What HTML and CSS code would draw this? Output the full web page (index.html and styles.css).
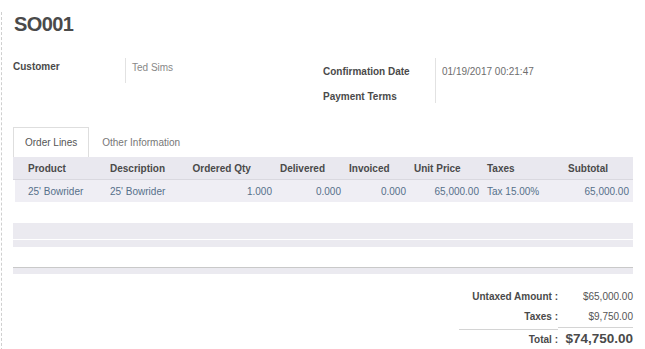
FILE: index.html
```html
<!DOCTYPE html>
<html lang="en">
<head>
    <meta charset="UTF-8">
    <title>SO001</title>
    <link rel="stylesheet" href="styles.css">
</head>
<body>
    <div class="sheet">
        <h1 class="title">SO001</h1>

        <div class="groups">
            <div class="group group-left">
                <div class="label">Customer</div>
                <div class="value">Ted Sims</div>
            </div>
            <div class="group group-right">
                <div class="label first">Confirmation Date</div>
                <div class="value first">01/19/2017 00:21:47</div>
                <div class="label second">Payment Terms</div>
                <div class="value second"></div>
            </div>
        </div>

        <div class="tabs">
            <div class="tab active">Order Lines</div>
            <div class="tab">Other Information</div>
        </div>

        <table class="lines">
            <colgroup>
                <col style="width: 93px">
                <col style="width: 82.5px">
                <col style="width: 87.5px">
                <col style="width: 69px">
                <col style="width: 65px">
                <col style="width: 73px">
                <col style="width: 81px">
                <col style="width: 69px">
            </colgroup>
            <thead>
                <tr>
                    <th class="first-col">Product</th>
                    <th>Description</th>
                    <th>Ordered Qty</th>
                    <th>Delivered</th>
                    <th>Invoiced</th>
                    <th>Unit Price</th>
                    <th>Taxes</th>
                    <th>Subtotal</th>
                </tr>
            </thead>
            <tbody>
                <tr>
                    <td class="first-col">25' Bowrider</td>
                    <td>25' Bowrider</td>
                    <td class="num">1.000</td>
                    <td class="num">0.000</td>
                    <td class="num">0.000</td>
                    <td class="num">65,000.00</td>
                    <td>Tax 15.00%</td>
                    <td class="num">65,000.00</td>
                </tr>
            </tbody>
        </table>

        <div class="empty-rows">
            <div class="band band-tall"></div>
            <div class="band band-short"></div>
        </div>
        <div class="list-foot"></div>

        <div class="totals">
            <div class="t-label">Untaxed Amount :</div>
            <div class="t-value">$65,000.00</div>
            <div class="t-label">Taxes :</div>
            <div class="t-value">$9,750.00</div>
            <div class="t-label total">Total :</div>
            <div class="t-value total grand">$74,750.00</div>
        </div>
    </div>
</body>
</html>
```

FILE: styles.css
```css
body { margin: 0; font-family: "Liberation Sans", Arial, sans-serif; font-size: 10px; line-height: 13px; color: #4c4c4c; background: #fff; }
.sheet { margin-left: 1px; border-left: 1px dashed #cfcfcf; padding: 0 12px 0 11px; min-height: 349px; box-sizing: border-box; }

.title { margin: 12px 0 22px 1px; font-size: 20px; line-height: 24px; font-weight: bold; color: #4a4a4a; letter-spacing: -0.6px; }

.groups { display: flex; }
.group { display: grid; grid-template-columns: 112px 1fr; align-content: start; }
.group-left { width: 310px; }
.group-right { flex: 1; }
.label { font-weight: bold; color: #4a4a4a; }
.value { border-left: 1px solid #e2e2e2; padding-left: 6px; color: #6e6e6e; }
.group-left .label, .group-left .value { padding: 2px 0 10px; }
.group-left .value { padding: 3px 0 9px 6px; color: #888; }
.group-right .first { padding-top: 7px; padding-bottom: 7px; }
.group-right .second { padding-top: 5px; }
.group-right .value { padding-left: 6px; }

.tabs { display: flex; margin-top: 24px; }
.tab { padding: 8px 11px; border: 1px solid transparent; border-bottom: none; color: #777; }
.tab.active { border-color: #dedede; color: #555; }
.tab + .tab { padding-left: 12px; }

.lines { width: 620px; border-collapse: collapse; table-layout: fixed; }
.lines th, .lines td { padding: 0 4px; height: 22px; text-align: left; white-space: nowrap; }
.lines th { background: #e9e8ef; font-weight: bold; color: #4a4a4a; border-bottom: 1px solid #d9d8df; }
.lines td { background: #efeef4; color: #56708a; }
.lines td:first-child { box-shadow: inset 2px 0 0 #fff; }
.lines .first-col { padding-left: 15px; }
.lines .num { text-align: right; }

.empty-rows { margin-top: 21px; }
.band { background: #ebeaf0; }
.band-tall { height: 16px; border-bottom: 1px solid #fff; }
.band-short { height: 7px; }
.list-foot { margin-top: 20px; height: 6px; border-top: 1px solid #c9c9c9; background: #ebeaf0; }

.totals { display: grid; grid-template-columns: 99px 75px; margin: 13px 0 0 auto; width: 174px; align-items: baseline; }
.t-label { text-align: right; font-weight: bold; color: #4a4a4a; padding: 3px 0 4px; }
.t-value { text-align: right; color: #555; padding: 3px 0 4px; }
.total { border-top: 1px solid #d4d4d4; padding-top: 3px; }
.grand { font-size: 13.5px; line-height: 16px; font-weight: bold; color: #4a4a4a; }
```
